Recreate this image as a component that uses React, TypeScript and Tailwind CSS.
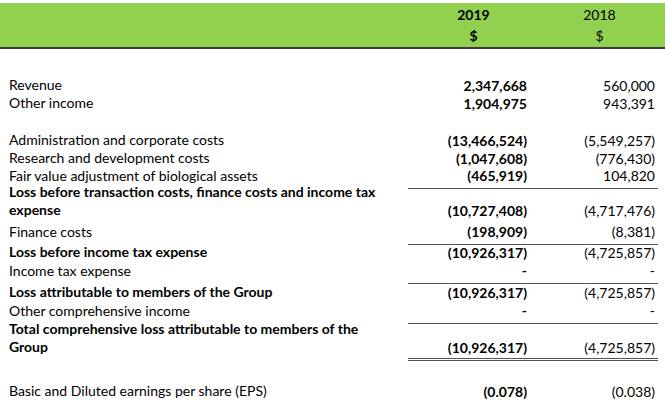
import React from "react";

type Row = {
  label: string;
  v1?: string;
  v2?: string;
  bold?: boolean;
  two?: boolean;
  h: string;
  border?: "single" | "double";
};

const rows: (Row | { spacer: string })[] = [
  { spacer: "h-[25px]" },
  { label: "Revenue", v1: "2,347,668", v2: "560,000", h: "h-[18px]" },
  { label: "Other income", v1: "1,904,975", v2: "943,391", h: "h-[18px]" },
  { spacer: "h-[19px]" },
  { label: "Administration and corporate costs", v1: "(13,466,524)", v2: "(5,549,257)", h: "h-[18px]" },
  { label: "Research and development costs", v1: "(1,047,608)", v2: "(776,430)", h: "h-[18px]" },
  { label: "Fair value adjustment of biological assets", v1: "(465,919)", v2: "104,820", h: "h-[18px]", border: "single" },
  {
    label: "Loss before transaction costs, finance costs and income tax expense",
    v1: "(10,727,408)",
    v2: "(4,717,476)",
    bold: true,
    two: true,
    h: "h-[38px]",
  },
  { label: "Finance costs", v1: "(198,909)", v2: "(8,381)", h: "h-[20px]", border: "single" },
  { label: "Loss before income tax expense", v1: "(10,926,317)", v2: "(4,725,857)", bold: true, h: "h-[19px]" },
  { label: "Income tax expense", v1: "-", v2: "-", h: "h-[21px]", border: "single" },
  { label: "Loss attributable to members of the Group", v1: "(10,926,317)", v2: "(4,725,857)", bold: true, h: "h-[19px]" },
  { label: "Other comprehensive income", v1: "-", v2: "-", h: "h-[20px]", border: "single" },
  {
    label: "Total comprehensive loss attributable to members of the Group",
    v1: "(10,926,317)",
    v2: "(4,725,857)",
    bold: true,
    two: true,
    h: "h-[41px]",
    border: "double",
  },
  { spacer: "h-[19px]" },
  { label: "Basic and Diluted earnings per share (EPS)", v1: "(0.078)", v2: "(0.038)", h: "h-[18px]" },
];

export default function App() {
  return (
    <div
      className="w-[665px] h-[402px] bg-white text-black overflow-hidden text-[14px]"
      style={{ fontFamily: "Lato, 'Noto Sans', sans-serif" }}
    >
      <div className="pt-[3px]">
        <div className="grid grid-cols-[408px_123px_134px] h-[46px] bg-[#92d050] border-b-2 border-[#3d3d3d] leading-[21px]">
          <div />
          <div className="flex flex-col items-center pl-[8px] pt-[1px] font-bold">
            <span>2019</span>
            <span>$</span>
          </div>
          <div className="flex flex-col items-center pl-[10px] pr-[7px] pt-[1px]">
            <span>2018</span>
            <span>$</span>
          </div>
        </div>
      </div>
      {rows.map((r, i) => {
        if ("spacer" in r) return <div key={i} className={r.spacer} />;
        const b =
          r.border === "single"
            ? "border-b border-[#555]"
            : r.border === "double"
            ? "border-b-[3px] border-double border-[#555]"
            : "";
        return (
          <div key={i} className={`grid grid-cols-[408px_123px_127px] ${r.h}`}>
            <div
              className={`pl-[9px] pr-[20px] flex ${
                r.two ? "items-start leading-[18px]" : "items-center pb-[3px]"
              } ${r.bold ? "font-bold" : ""}`}
            >
              <span>{r.label}</span>
            </div>
            <div className={`flex items-end justify-end pr-[4px] font-bold ${b}`}>
              <span className={`leading-[18px] ${r.two ? "pb-[1px]" : "pb-[3px]"}`}>{r.v1}</span>
            </div>
            <div className={`flex items-end justify-end pr-[3px] ${b}`}>
              <span className={`leading-[18px] ${r.two ? "pb-[1px]" : "pb-[3px]"}`}>{r.v2}</span>
            </div>
          </div>
        );
      })}
    </div>
  );
}
